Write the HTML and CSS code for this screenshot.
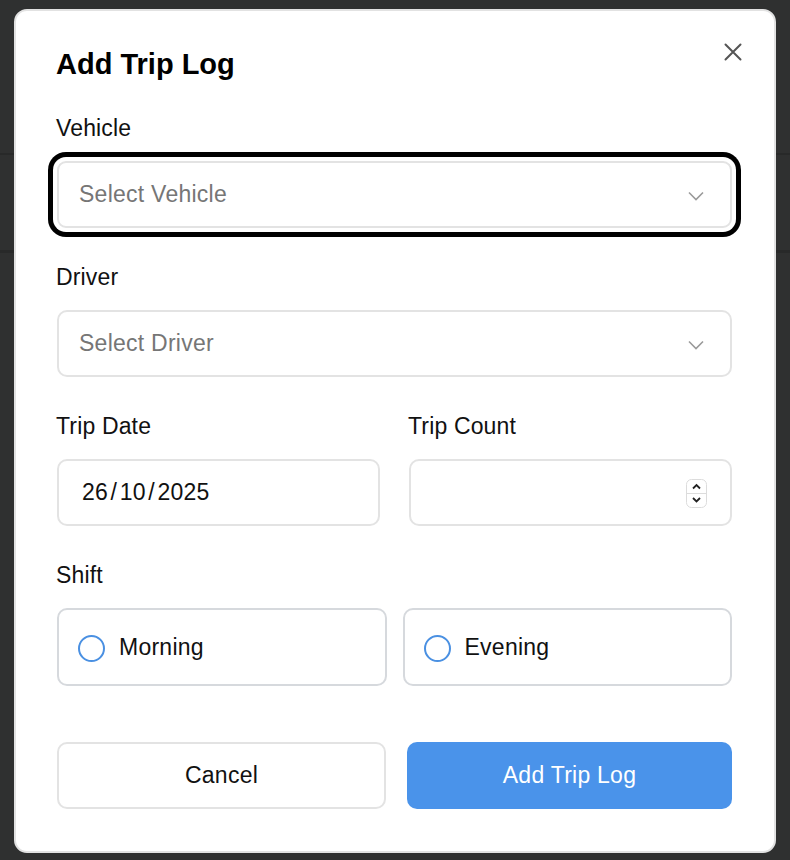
FILE: index.html
```html
<!DOCTYPE html>
<html lang="en">
<head>
<meta charset="utf-8">
<title>Add Trip Log</title>
<link rel="stylesheet" href="styles.css">
</head>
<body>
<div class="backdrop">
  <div class="modal">
    <button class="close" aria-label="Close">
      <svg width="18" height="18" viewBox="0 0 18 18"><path d="M1.5 1.5 L16.5 16.5 M16.5 1.5 L1.5 16.5" stroke="#555" stroke-width="2" stroke-linecap="round" fill="none"/></svg>
    </button>
    <h1 class="title">Add Trip Log</h1>

    <div class="field">
      <div class="label">Vehicle</div>
      <div class="control select focused">
        <span class="placeholder">Select Vehicle</span>
        <svg class="chev" width="16" height="10" viewBox="0 0 16 10"><path d="M1 1.5 L8 8.5 L15 1.5" stroke="#9a9a9a" stroke-width="1.6" fill="none"/></svg>
      </div>
    </div>

    <div class="field">
      <div class="label">Driver</div>
      <div class="control select">
        <span class="placeholder">Select Driver</span>
        <svg class="chev" width="16" height="10" viewBox="0 0 16 10"><path d="M1 1.5 L8 8.5 L15 1.5" stroke="#9a9a9a" stroke-width="1.6" fill="none"/></svg>
      </div>
    </div>

    <div class="row two">
      <div class="field">
        <div class="label">Trip Date</div>
        <div class="control date"><span class="value">26<span class="sep">/</span>10<span class="sep">/</span>2025</span></div>
      </div>
      <div class="field">
        <div class="label">Trip Count</div>
        <div class="control number">
          <span class="spinner">
            <svg width="21" height="29" viewBox="0 0 21 29"><rect x="0.5" y="0.5" width="20" height="28" rx="5" fill="#fff" stroke="#dcdcdc"/><line x1="1" y1="14.5" x2="20" y2="14.5" stroke="#dcdcdc"/><path d="M7 9.5 L10.5 6 L14 9.5" stroke="#222" stroke-width="1.8" fill="none"/><path d="M7 19 L10.5 22.5 L14 19" stroke="#222" stroke-width="1.8" fill="none"/></svg>
          </span>
        </div>
      </div>
    </div>

    <div class="field">
      <div class="label">Shift</div>
      <div class="row shifts">
        <label class="radio-card"><span class="radio"></span><span>Morning</span></label>
        <label class="radio-card"><span class="radio"></span><span>Evening</span></label>
      </div>
    </div>

    <div class="row actions">
      <button class="btn cancel">Cancel</button>
      <button class="btn primary">Add Trip Log</button>
    </div>
  </div>
</div>
</body>
</html>
```
FILE: styles.css
```css
html, body {
  margin: 0;
  padding: 0;
}
body {
  width: 790px;
  height: 860px;
  overflow: hidden;
  font-family: "Liberation Sans", Arial, Helvetica, sans-serif;
  color: #111;
  background:
    linear-gradient(to bottom,
      #2f3030 0, #2f3030 153px,
      #282929 153px, #282929 155px,
      #2f3030 155px, #2f3030 250px,
      #282929 250px, #282929 253px,
      #2f3030 253px);
}
.backdrop {
  padding: 9px 0 0 14px;
}
.modal {
  position: relative;
  box-sizing: border-box;
  width: 762px;
  height: 844px;
  background: #fff;
  border: 2px solid #e2e2e2;
  border-radius: 13px;
  padding: 36px 42px 0 40px;
}
.close {
  position: absolute;
  top: 32px;
  right: 32px;
  width: 18px;
  height: 18px;
  padding: 0;
  border: 0;
  background: none;
  display: flex;
}
.title {
  margin: 0 0 34px;
  font-size: 29px;
  line-height: 34px;
  font-weight: bold;
  color: #000;
}
.field {
  display: flex;
  flex-direction: column;
  margin-bottom: 36px;
}
.label {
  font-size: 23px;
  letter-spacing: 0.15px;
  line-height: 26px;
  margin-bottom: 20px;
  color: #111;
}
.control {
  box-sizing: border-box;
  height: 67px;
  border: 2px solid #e3e3e3;
  border-radius: 10px;
  display: flex;
  align-items: center;
  font-size: 23px;
  letter-spacing: 0.25px;
  background: #fff;
  margin-left: 1px;
}
.select {
  padding: 0 26px 0 20px;
  justify-content: space-between;
}
.focused {
  box-shadow: 0 0 0 4px #fff, 0 0 0 9px #000;
  border-radius: 9px;
}
.placeholder {
  color: #767676;
}
.chev {
  margin-top: 2px;
}
.row {
  display: flex;
}
.row.two {
  gap: 28px;
}
.row.two .field {
  flex: 1;
}
.date {
  padding-left: 23px;
}
.value {
  color: #111;
}
.sep {
  margin: 0 2.5px;
}
.number {
  justify-content: flex-end;
  padding-right: 23px;
}
.spinner {
  display: flex;
  margin-top: 2px;
}
.shifts {
  gap: 16px;
  margin-bottom: 20px;
  margin-left: 1px;
}
.radio-card {
  flex: 1;
  box-sizing: border-box;
  height: 78px;
  border: 2px solid #d6d9dd;
  border-radius: 10px;
  display: flex;
  align-items: center;
  padding-left: 19px;
  gap: 14px;
  font-size: 23px;
  letter-spacing: 0.25px;
  color: #111;
}
.radio {
  box-sizing: border-box;
  width: 27px;
  height: 27px;
  border: 2px solid #4a90e2;
  border-radius: 50%;
  margin-top: 2px;
}
.actions {
  gap: 21px;
  margin-left: 1px;
}
.btn {
  flex: 1;
  box-sizing: border-box;
  height: 67px;
  border-radius: 10px;
  font-family: "Liberation Sans", Arial, Helvetica, sans-serif;
  font-size: 23px;
  letter-spacing: 0.25px;
  padding: 0;
}
.cancel {
  background: #fff;
  border: 2px solid #e3e3e3;
  color: #111;
}
.primary {
  background: #4a93ea;
  border: 0;
  color: #fff;
}
```
